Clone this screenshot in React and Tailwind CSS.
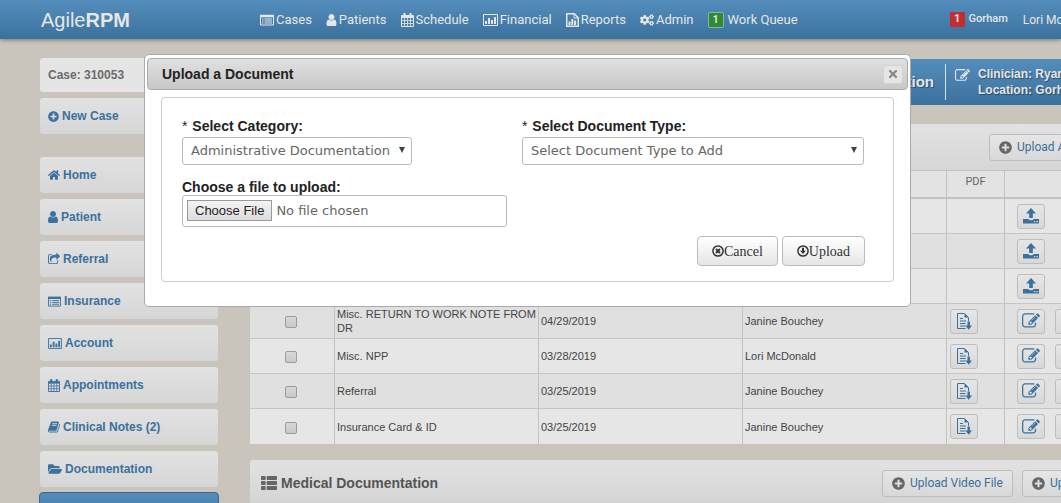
import React from "react";
import { FaHome, FaPlusCircle, FaFolderOpen, FaThList, FaCogs, FaTimes } from "react-icons/fa";

const UserIcon = ({ className }) => (
  <svg viewBox="256 128 1280 1536" className={className} fill="currentColor">
    <path d="M1536 1399q0 109-62.500 187t-150.500 78h-854q-88 0-150.500-78t-62.500-187q0-85 8.500-160.500t31.500-152 58.500-131 94-89 134.500-34.500q131 128 313 128t313-128q76 0 134.500 34.500t94 89 58.500 131 31.500 152 8.500 160.500zm-256-887q0 159-112.500 271.500t-271.500 112.500-271.500-112.500-112.500-271.500 112.500-271.500 271.500-112.500 271.500 112.500 112.500 271.500z" />
  </svg>
);

const EditIcon = ({ className }) => (
  <svg viewBox="0 0 1792 1792" className={className} fill="currentColor">
    <path d="M888 1184l116-116-152-152-116 116v56h96v96h56zm440-720q-16-16-33 1l-350 350q-17 17-1 33t33-1l350-350q17-17 1-33zm80 594v190q0 119-84.500 203.500t-203.500 84.500h-832q-119 0-203.500-84.500t-84.500-203.500v-832q0-119 84.500-203.500t203.500-84.500h832q63 0 117 25 15 7 18 23 3 17-9 29l-49 49q-14 14-32 8-23-6-45-6h-832q-66 0-113 47t-47 113v832q0 66 47 113t113 47h832q66 0 113-47t47-113v-126q0-13 9-22l64-64q15-15 35-7t20 29zm-96-738l288 288-672 672h-288v-288zm444 132l-92 92-288-288 92-92q28-28 68-28t68 28l152 152q28 28 28 68t-28 68z" />
  </svg>
);

const ShareIcon = ({ className }) => (
  <svg viewBox="64 0 1664 1664" className={className} fill="currentColor">
    <path d="M1472 989v259q0 119-84.500 203.500t-203.500 84.500h-832q-119 0-203.500-84.500t-84.500-203.500v-832q0-119 84.500-203.500t203.500-84.500h255q13 0 22.500 9.500t9.500 22.500q0 27-26 32-77 26-133 60-10 4-16 4h-112q-66 0-113 47t-47 113v832q0 66 47 113t113 47h832q66 0 113-47t47-113v-214q0-19 18-29 28-13 54-37 16-16 35-8 21 9 21 31zm237-496l-384 384q-18 19-45 19-12 0-25-5-39-17-39-59v-192h-160q-323 0-438 131-119 137-74 473 3 23-20 34-8 2-12 2-16 0-26-13-10-14-21-31t-39.500-68.500-49.500-99.500-38.500-114-17.500-122q0-49 3.500-91t14-90 28-88 47-81.500 68.500-74 94.500-61.500 124.500-48.500 159.500-30.500 196.500-11h160v-192q0-42 39-59 13-5 25-5 26 0 45 19l384 384q19 19 19 45t-19 45z" />
  </svg>
);

const ListIcon = ({ className }) => (
  <svg viewBox="0 0 14 12" className={className} stroke="currentColor" fill="none">
    <path d="M0.5 1.5h13v9.500h-13z" />
    <path d="M0 2h14" strokeWidth="2.500" />
    <path d="M2 5h1.500M4.500 5h7.500M2 7h1.500M4.500 7h7.500M2 9h1.500M4.500 9h7.500" />
  </svg>
);

const CalendarIcon = ({ className }) => (
  <svg viewBox="0 0 13 14" className={className} fill="none" stroke="currentColor">
    <path d="M0.5 2.5h12v11h-12z" />
    <path d="M0 3h13v2H0z" fill="currentColor" stroke="none" />
    <path d="M3.500 0v4M9.500 0v4" strokeWidth="2" />
    <path d="M3.500 5v9M6.500 5v9M9.500 5v9M0 7.500h13M0 10.500h13" strokeWidth="0.8" />
  </svg>
);

const ChartIcon = ({ className }) => (
  <svg viewBox="0 0 15 12" className={className}>
    <path d="M0.5 0.5h14v11h-14z" fill="none" stroke="currentColor" />
    <path d="M2 7h2v3H2zM5 4h2v6H5zM8 6h2v4H8zM11 3h2v7h-2z" fill="currentColor" />
  </svg>
);

const ReportIcon = ({ className }) => (
  <svg viewBox="0 0 13 14" className={className}>
    <path d="M0.750 0.750h7.500l4 4v8.500H0.750z" fill="none" stroke="currentColor" strokeWidth="1.500" />
    <path d="M8 1v4h4" fill="none" stroke="currentColor" />
    <path d="M2.500 8.500h2v3.500h-2zM5.300 6h2v6h-2zM8.100 7.500h2V12h-2z" fill="currentColor" />
  </svg>
);

const BookIcon = ({ className }) => (
  <svg viewBox="0 0 1664 1536" className={className} fill="currentColor">
    <path d="M1639 350q40 57 18 129l-275 906q-19 64-76.500 107.500t-122.500 43.500h-923q-77 0-148.500-53.500t-99.500-131.500q-24-67-2-127 0-4 3-27t4-37q1-8-3-21.500t-3-19.500q2-11 8-21t16.500-23.500 16.500-23.500q23-38 45-91.500t30-91.500q3-10 .5-30t-.5-28q3-11 17-28t17-23q21-36 42-92t25-90q1-9-2.500-32t.5-28q4-13 22-30.500t22-22.500q19-26 42.500-84.500t27.500-96.500q1-8-3-25.500t-2-26.500q2-8 9-18t18-23 17-21q8-12 16.500-30.500t15-35 16-36 19.500-32 26.500-23.500 36-11.500 47.500 5.500l-1 3q38-9 51-9h761q74 0 114 56t18 130l-274 906q-36 119-71.500 153.500t-128.500 34.500h-869q-27 0-38 15-11 16-1 43 24 70 144 70h923q29 0 56-15.500t35-41.500l300-987q7-22 5-57 38 15 59 43zM575 352q-4 13 2 22.500t20 9.500h608q13 0 25.500-9.500t16.500-22.500l21-64q4-13-2-22.500t-20-9.500h-608q-13 0-25.500 9.500t-16.500 22.500zM492 608q-4 13 2 22.500t20 9.500h608q13 0 25.500-9.500t16.500-22.500l21-64q4-13-2-22.500t-20-9.500h-608q-13 0-25.500 9.500t-16.500 22.500z" />
  </svg>
);

const TrayUploadIcon = ({ className }) => (
  <svg viewBox="0 0 16 16" className={className} fill="currentColor">
    <path d="M8 0l5 5.500h-3.200V10H6.200V5.500H3z" />
    <path fillRule="evenodd" d="M0 11h5.200q.6 1.300 2.800 1.300t2.800-1.300H16v4.500H0zM11 13v1.200h1.300V13zM13.500 13v1.200h1.300V13z" />
  </svg>
);

const FileDownIcon = ({ className }) => (
  <svg viewBox="0 0 15 17" className={className}>
    <path d="M11.500 8V4.500l-4-4H0.500v15h8" fill="none" stroke="currentColor" />
    <path d="M7.500 0.500v4h4z" fill="currentColor" />
    <path d="M3 5.500h3M3 8h6M3 10.500h5.500M3 13h5.500" stroke="currentColor" strokeWidth="1" />
    <path d="M10.500 8.500h2.400v4h2.100l-3.300 4.200-3.300-4.200h2.100z" fill="currentColor" />
  </svg>
);

const CircleXIcon = ({ className }) => (
  <svg viewBox="0 0 12 12" className={className} fill="none" stroke="currentColor">
    <circle cx="6" cy="6" r="5.100" strokeWidth="1.500" />
    <path d="M4 4l4 4M8 4l-4 4" strokeWidth="1.900" />
  </svg>
);

const CircleDownIcon = ({ className }) => (
  <svg viewBox="0 0 12 12" className={className}>
    <circle cx="6" cy="6" r="5.100" fill="none" stroke="currentColor" strokeWidth="1.500" />
    <path d="M5 2.800h2v3h1.900L6 9 3.100 5.800H5z" fill="currentColor" />
  </svg>
);

const navLinks = [
  { label: "Cases", Icon: ListIcon, size: "w-[14px] h-[12px]" },
  { label: "Patients", Icon: UserIcon, size: "w-[11px] h-[12px]" },
  { label: "Schedule", Icon: CalendarIcon, size: "w-[13px] h-[14px]" },
  { label: "Financial", Icon: ChartIcon, size: "w-[15px] h-[12px]" },
  { label: "Reports", Icon: ReportIcon, size: "w-[13px] h-[14px]" },
  { label: "Admin", Icon: FaCogs, size: "size-[14px]" },
];

const sideLinks = [
  { label: "Home", Icon: FaHome, size: "size-[12px]" },
  { label: "Patient", Icon: UserIcon, size: "w-[10px] h-[12px]" },
  { label: "Referral", Icon: ShareIcon, size: "size-[12px]" },
  { label: "Insurance", Icon: ListIcon, size: "w-[13px] h-[11px]" },
  { label: "Account", Icon: ChartIcon, size: "w-[14px] h-[11px]" },
  { label: "Appointments", Icon: CalendarIcon, size: "w-[12px] h-[13px]" },
  { label: "Clinical Notes (2)", Icon: BookIcon, size: "size-[12px]" },
  { label: "Documentation", Icon: FaFolderOpen, size: "size-[14px]" },
];

const rows = [
  { uploaded: false },
  { uploaded: false },
  { uploaded: false },
  { uploaded: true, name: "Misc. RETURN TO WORK NOTE FROM DR", date: "04/29/2019", by: "Janine Bouchey" },
  { uploaded: true, name: "Misc. NPP", date: "03/28/2019", by: "Lori McDonald" },
  { uploaded: true, name: "Referral", date: "03/25/2019", by: "Janine Bouchey" },
  { uploaded: true, name: "Insurance Card & ID", date: "03/25/2019", by: "Janine Bouchey" },
];

const sideItem =
  "flex h-9 items-center gap-[3px] rounded-[3px] bg-linear-to-b from-[#e2e2e2] to-[#d6d6d6] pl-2 text-[12px] font-bold text-[#3a719d]";

function NavBar() {
  return (
    <header className="flex h-[39px] items-center bg-linear-to-b from-[#548dbc] to-[#3b719d] pl-[41px] whitespace-nowrap text-[#e6e6e6] shadow-[0_1px_4px_rgba(0,0,0,0.4)]">
      <a href="#home" className="w-[219px] shrink-0 text-[20px]">
        Agile<b>RPM</b>
      </a>
      <nav className="flex shrink-0 items-center gap-[14px] font-[Roboto,sans-serif] text-[13px]">
        {navLinks.map(({ label, Icon, size }) => (
          <a key={label} href="#nav" className="flex items-center gap-[2px]">
            <Icon className={size} />
            {label}
          </a>
        ))}
        <a href="#queue" className="flex items-center gap-1">
          <span className="flex size-4 items-center justify-center rounded-[2px] border border-[#8db3a5] bg-[#2f8a35] text-[10px] font-bold">
            1
          </span>
          Work Queue
        </a>
      </nav>
      <div className="ml-[152px] flex shrink-0 items-center gap-[15px] font-[Roboto,sans-serif] text-[12px]">
        <a href="#location" className="flex items-center gap-1 text-[11px] font-medium">
          <span className="flex size-[15px] items-center justify-center rounded-[1px] bg-[#c12e2f] text-[11px] font-bold">
            1
          </span>
          Gorham
        </a>
        <a href="#account">Lori McDonald</a>
      </div>
    </header>
  );
}

function Sidebar() {
  return (
    <aside className="w-[178px] shrink-0">
      <div className="flex h-[34px] items-center rounded-[3px] bg-[#e5e5e5] pl-2 text-[12px] font-bold text-[#6b6b6b]">
        Case: 310053
      </div>
      <a href="#new" className={`${sideItem} mt-[6px]`}>
        <FaPlusCircle className="size-[11px]" />
        New Case
      </a>
      <nav className="mt-[23px] flex flex-col gap-[6px]">
        {sideLinks.map(({ label, Icon, size }) => (
          <a key={label} href="#section" className={sideItem}>
            <Icon className={size} />
            {label}
          </a>
        ))}
        <a
          href="#active"
          aria-label="Documents"
          className="-mx-px -mt-px h-9 rounded-[4px] border border-[#34688f] bg-linear-to-b from-[#548dbc] to-[#3b719d]"
        />
      </nav>
    </aside>
  );
}

function GreyButton({ children }) {
  return (
    <button
      type="button"
      className="flex h-[27px] items-center gap-[5px] rounded-[3px] border border-[#bdbdbd] bg-linear-to-b from-[#e6e6e6] to-[#d8d8d8] px-[9px] font-[Roboto,sans-serif] text-[12px] whitespace-nowrap text-[#3a719d]"
    >
      <FaPlusCircle className="size-[13px] text-[#666]" />
      {children}
    </button>
  );
}

function IconButton({ label, children }) {
  return (
    <button
      type="button"
      aria-label={label}
      className="flex h-[25px] w-[28px] shrink-0 items-center justify-center rounded-[3px] border border-[#bdbdbd] bg-linear-to-b from-[#e6e6e6] to-[#d8d8d8] text-[#3a719d]"
    >
      {children}
    </button>
  );
}

const cell = "border-r border-[#c2c2c2] py-0 pr-0";

function DocumentTable() {
  return (
    <table className="w-full table-fixed border-separate border-spacing-0 text-[11px] leading-[14px] text-[#444]">
      <colgroup>
        <col className="w-[85px]" />
        <col className="w-[204px]" />
        <col className="w-[204px]" />
        <col className="w-[204px]" />
        <col className="w-[58px]" />
        <col />
      </colgroup>
      <thead>
        <tr className="h-7 bg-[#e3e3e3]">
          {["", "", "", "", "PDF", ""].map((h, i) => (
            <th
              key={i}
              scope="col"
              className="border-r border-b-2 border-[#c2c2c2] p-0 pb-1 text-center font-[Roboto,sans-serif] font-normal text-[#666]"
            >
              {h}
            </th>
          ))}
        </tr>
      </thead>
      <tbody>
        {rows.map((r, i) => (
          <tr
            key={i}
            className="h-[35px] odd:bg-[#e6e6e6] even:bg-[#e0e0e0] [&>td]:border-b [&>td]:border-b-[#c6c6c6] last:[&>td]:border-b-0"
          >
            <td className={`${cell} pl-0 pr-[2px] text-center`}>
              {r.uploaded && (
                <input
                  type="checkbox"
                  aria-label={r.name}
                  className="inline-block size-3 appearance-none rounded-[2px] border border-[#9c9c9c] bg-linear-to-b from-[#d8d8d8] to-[#c9c9c9] align-middle"
                />
              )}
            </td>
            <td className={`${cell} pl-[2px]`}>{r.name}</td>
            <td className={`${cell} pl-[2px]`}>{r.date}</td>
            <td className={`${cell} pl-[2px]`}>{r.by}</td>
            <td className={`${cell} pl-[3px]`}>
              {r.uploaded && (
                <IconButton label="Download PDF">
                  <FileDownIcon className="h-[17px] w-[15px]" />
                </IconButton>
              )}
            </td>
            <td className="p-0 pl-3">
              <div className="flex gap-[10px]">
                {r.uploaded ? (
                  <>
                    <IconButton label="Edit">
                      <EditIcon className="size-[18px]" />
                    </IconButton>
                    <IconButton label="Remove">
                      <FaTimes className="size-3" />
                    </IconButton>
                  </>
                ) : (
                  <IconButton label="Upload">
                    <TrayUploadIcon className="size-4" />
                  </IconButton>
                )}
              </div>
            </td>
          </tr>
        ))}
      </tbody>
    </table>
  );
}

function Main() {
  return (
    <main className="min-w-[1000px] flex-1 pt-px">
      <div className="flex h-[46px] items-center bg-linear-to-b from-[#548dbc] to-[#3b719d] whitespace-nowrap text-[#e6e6e6] [text-shadow:1px_1px_1px_rgba(0,0,0,0.4)]">
        <h1 className="w-[684px] text-right text-[15px] font-bold">Documentation</h1>
        <div className="ml-[11px] flex h-9 items-center gap-2 border-l border-[#e0e0e0] pl-[9px] text-[12px] leading-4 font-bold">
          <EditIcon className="mt-1 size-[15px] self-start" />
          <div>
            Clinician: Ryan
            <br />
            Location: Gorham
          </div>
        </div>
      </div>

      <section className="mt-[19px]">
        <div className="flex h-[47px] items-center border-b border-[#c2c2c2] bg-linear-to-b from-[#e2e2e2] to-[#d6d6d6] pl-[739px]">
          <GreyButton>Upload Admin File</GreyButton>
        </div>
        <DocumentTable />
      </section>

      <section className="mt-4 flex h-[46px] items-center gap-[9px] rounded-t-[3px] bg-linear-to-b from-[#e2e2e2] to-[#d4d4d4] pl-[11px]">
        <h2 className="flex w-[612px] items-center gap-1 text-[14px] font-bold text-[#555]">
          <FaThList className="size-4 text-[#666]" />
          Medical Documentation
        </h2>
        <GreyButton>Upload Video File</GreyButton>
        <GreyButton>Upload Document</GreyButton>
      </section>
    </main>
  );
}

function SelectBox({ id, label, option, className }) {
  return (
    <div>
      <label htmlFor={id} className="block h-[22px] text-[14px] leading-[22px] font-bold text-[#222]">
        <span className="mr-px font-normal">*</span> {label}
      </label>
      <div className={`relative ${className}`}>
        <select
          id={id}
          className="h-7 w-full appearance-none rounded-[3px] border border-[#bbb] bg-white pl-2 font-['DejaVu_Sans',sans-serif] text-[13px] text-[#666]"
        >
          <option>{option}</option>
        </select>
        <svg viewBox="0 0 6 6" className="pointer-events-none absolute top-[10px] right-[7px] size-[6px]" fill="#444">
          <path d="M0 0h6L3 6z" />
        </svg>
      </div>
    </div>
  );
}

const dialogButton =
  "flex h-[30px] items-center rounded-[4px] border border-[#bbb] bg-linear-to-b from-white to-[#e6e6e6] px-[14px] font-['Liberation_Serif',serif] text-[14px] text-[#333]";

function UploadDialog() {
  return (
    <div
      role="dialog"
      aria-labelledby="dialog-title"
      className="fixed top-[54px] right-[150px] left-36 h-[253px] rounded-[5px] border border-[#aaa] bg-white px-[2px] py-[3px]"
    >
      <div className="flex h-8 items-center justify-between rounded-[4px] border border-[#aaa] bg-linear-to-b from-[#e0e0e0] to-[#c8c8c8] pr-1 pl-[14px]">
        <h2 id="dialog-title" className="text-[14px] font-bold text-[#222]">
          Upload a Document
        </h2>
        <button
          type="button"
          aria-label="Close"
          className="flex h-[19px] w-5 items-center justify-center rounded-[3px] border border-[#d3d3d3] bg-[#e6e6e6] text-[#888]"
        >
          <FaTimes className="size-3" />
        </button>
      </div>
      <form className="mx-[14px] mt-[7px] h-[185px] rounded-[4px] border border-[#ccc] px-5 pt-[17px]">
        <div className="grid grid-cols-[340px_1fr]">
          <SelectBox id="category" label="Select Category:" option="Administrative Documentation" className="w-[230px]" />
          <SelectBox id="doctype" label="Select Document Type:" option="Select Document Type to Add" className="w-[342px]" />
        </div>
        <label htmlFor="file" className="mt-3 block h-[18px] text-[14px] leading-5 font-bold text-[#222]">
          Choose a file to upload:
        </label>
        <input
          id="file"
          type="file"
          className="block h-8 w-[325px] rounded-[3px] border border-[#bbb] bg-white py-1 pl-1 font-['DejaVu_Sans',sans-serif] text-[13px] text-[#666] file:mr-1 file:h-[21px] file:border file:border-solid file:border-[#999] file:bg-linear-to-b file:from-[#f4f4f4] file:to-[#dcdcdc] file:px-[7px] file:font-['Liberation_Sans',sans-serif] file:text-[13px] file:leading-4 file:text-[#222]"
        />
        <div className="mt-[9px] mr-2 flex justify-end gap-1">
          <button type="button" className={dialogButton}>
            <CircleXIcon className="size-3" />
            Cancel
          </button>
          <button type="button" className={dialogButton}>
            <CircleDownIcon className="size-3" />
            Upload
          </button>
        </div>
      </form>
    </div>
  );
}

export default function App() {
  return (
    <div className="h-screen overflow-hidden bg-[#c9c4bc] font-['Liberation_Sans',Arial,sans-serif]">
      <NavBar />
      <div className="flex gap-8 pt-[19px] pl-10">
        <Sidebar />
        <Main />
      </div>
      <UploadDialog />
    </div>
  );
}
